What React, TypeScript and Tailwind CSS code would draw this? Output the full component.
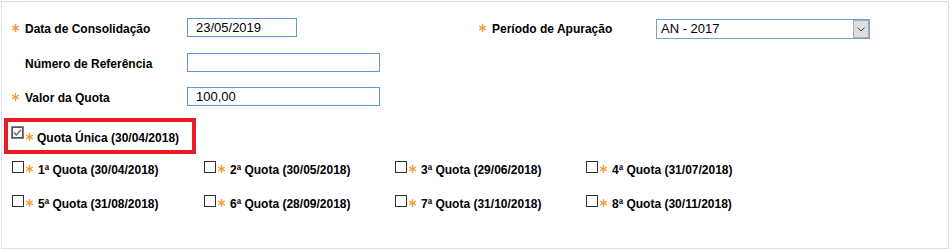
import React from "react";

const Star = () => (
  <svg width="7" height="8" viewBox="0 0 7 8" className="shrink-0 mt-[2px]">
    <g stroke="#f79a3e" strokeWidth="1.4">
      <line x1="3.5" y1="0" x2="3.5" y2="8" />
      <line x1="0.2" y1="2" x2="6.8" y2="6" />
      <line x1="0.2" y1="6" x2="6.8" y2="2" />
    </g>
  </svg>
);

const Label = ({ text, star = true, w }: { text: string; star?: boolean; w: string }) => (
  <div className={`flex items-start mt-[4px] shrink-0 ${w}`}>
    {star ? <Star /> : <span className="w-[7px] shrink-0" />}
    <span className="ml-[6px] leading-[14px] whitespace-nowrap">{text}</span>
  </div>
);

const Input = ({ value = "", w }: { value?: string; w: string }) => (
  <div
    className={`h-[19px] ${w} border border-[#5f98d2] bg-white flex items-center pl-[8px] text-[13px] font-normal leading-[15px] whitespace-nowrap`}
  >
    {value}
  </div>
);

const Box = () => (
  <span className="w-[12px] h-[12px] border border-[#333] bg-white shrink-0 block" />
);

const Quota = ({ text, w }: { text: string; w: string }) => (
  <div className={`flex items-start shrink-0 ${w}`}>
    <Box />
    <span className="ml-[2px] mt-[2px] flex">
      <Star />
    </span>
    <span className="ml-[5px] mt-[2px] leading-[14px] whitespace-nowrap">{text}</span>
  </div>
);

export default function App() {
  return (
    <div className="ml-px mt-px w-[948px] h-[248px] border border-[#d5e3ee] bg-white text-[12px] font-bold text-black font-['Liberation_Sans',Arial,sans-serif]">
      <div className="flex items-start h-[20px] mt-[16px] pl-[10px]">
        <Label text="Data de Consolidação" w="w-[175px]" />
        <div className="w-[292px] shrink-0">
          <Input value="23/05/2019" w="w-[110px]" />
        </div>
        <Label text="Período de Apuração" w="w-[177px]" />
        <div className="mt-[1px] w-[214px] h-[20px] border border-[#6fa3d6] bg-white flex items-stretch">
          <span className="flex-1 flex items-center pl-[4px] text-[13px] font-normal whitespace-nowrap">
            AN - 2017
          </span>
          <span className="w-[16px] border border-[#acacac] bg-[#dedede] flex items-center justify-center">
            <svg width="8" height="5" viewBox="0 0 8 5">
              <path d="M0.5 0.5 L4 4 L7.5 0.5" fill="none" stroke="#4a4a4a" strokeWidth="1" />
            </svg>
          </span>
        </div>
      </div>

      <div className="flex items-start h-[20px] mt-[15px] pl-[10px]">
        <Label text="Número de Referência" star={false} w="w-[175px]" />
        <Input w="w-[193px]" />
      </div>

      <div className="flex items-start h-[20px] mt-[14px] pl-[10px]">
        <Label text="Valor da Quota" w="w-[175px]" />
        <Input value="100,00" w="w-[193px]" />
      </div>

      <div className="ml-[2px] mt-[11px] w-[192px] h-[36px] border-[4px] border-[#ed1c24] flex items-start pl-[3px] pt-[4px]">
        <span className="w-[13px] h-[13px] shrink-0 block">
          <svg width="13" height="13" viewBox="0 0 13 13">
            <rect x="0.5" y="0.5" width="12" height="12" fill="white" stroke="#000" strokeDasharray="1 1" />
            <rect x="1.5" y="1.5" width="10" height="10" fill="none" stroke="#555" />
            <path d="M3 6.5 L5.3 9 L10 3.8" fill="none" stroke="#6d6d6d" strokeWidth="1.5" />
          </svg>
        </span>
        <span className="ml-[2px] mt-[5px] flex">
          <Star />
        </span>
        <span className="ml-[4px] mt-[5px] leading-[14px] whitespace-nowrap">Quota Única (30/04/2018)</span>
      </div>

      <div className="flex items-start h-[16px] mt-[7px] pl-[10px]">
        <Quota text="1ª Quota (30/04/2018)" w="w-[192px]" />
        <Quota text="2ª Quota (30/05/2018)" w="w-[191px]" />
        <Quota text="3ª Quota (29/06/2018)" w="w-[191px]" />
        <Quota text="4ª Quota (31/07/2018)" w="w-[191px]" />
      </div>

      <div className="flex items-start h-[16px] mt-[18px] pl-[10px]">
        <Quota text="5ª Quota (31/08/2018)" w="w-[192px]" />
        <Quota text="6ª Quota (28/09/2018)" w="w-[191px]" />
        <Quota text="7ª Quota (31/10/2018)" w="w-[191px]" />
        <Quota text="8ª Quota (30/11/2018)" w="w-[191px]" />
      </div>
    </div>
  );
}
